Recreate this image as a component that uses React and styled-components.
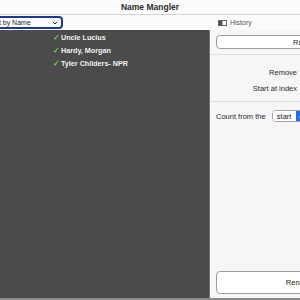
import React from 'react';
import styled, { createGlobalStyle } from 'styled-components';

const GlobalStyle = createGlobalStyle`
    html, body {
        margin: 0;
        padding: 0;
        width: 300px;
        height: 300px;
        overflow: hidden;
        background: #f6f6f6;
        font-family: "Liberation Sans", Arial, sans-serif;
    }
`;

const Window = styled.div`
    width: 300px;
    height: 300px;
    display: flex;
    flex-direction: column;
    overflow: hidden;
`;

const TitleBar = styled.div`
    height: 14px;
    flex: none;
    display: flex;
    align-items: center;
    justify-content: center;
    background: #fbfbfb;
    border-bottom: 1px solid #d4d4d4;
    font-size: 8.5px;
    font-weight: bold;
    color: #2b2b2b;
`;

const Toolbar = styled.div`
    height: 15px;
    flex: none;
    display: grid;
    grid-template-columns: 210px 1fr;
    background: #fbfbfb;
`;

const ToolLeft = styled.div`
    display: flex;
    align-items: center;
    overflow: hidden;
`;

const SortSelect = styled.div`
    margin-left: -18px;
    width: 70px;
    height: 9px;
    display: flex;
    align-items: center;
    justify-content: space-between;
    padding: 0 3px 0 4px;
    background: #fff;
    border: 2px solid #1c3a94;
    border-radius: 4px;
    font-size: 7px;
    color: #222;
`;

const ToolRight = styled.div`
    display: flex;
    align-items: center;
    gap: 3px;
    padding-left: 8px;
    font-size: 7px;
    color: #555;
`;

const Body = styled.div`
    flex: 1;
    display: grid;
    grid-template-columns: 210px 1fr;
    min-height: 0;
`;

const ListPane = styled.div`
    background: #4b4b4b;
    border-right: 1px solid #727272;
    padding-top: 1px;
`;

const Row = styled.div`
    height: 13px;
    display: flex;
    align-items: center;
    padding-left: 53px;
    gap: 2px;
    font-size: 7.2px;
    font-weight: bold;
    color: #f2f2f2;
`;

const Check = styled.span`
    width: 6px;
    color: #72d04a;
    font-size: 8px;
`;

const SidePane = styled.div`
    width: 180px;
    display: flex;
    flex-direction: column;
    background: #f6f6f6;
`;

const Section = styled.div`
    padding: ${p => p.pad || '0 0 0 6px'};
    border-bottom: ${p => (p.last ? 'none' : '1px solid #dedede')};
    display: flex;
    flex-direction: column;
    flex: ${p => (p.grow ? 1 : 'none')};
`;

const PaneButton = styled.button`
    width: 168px;
    height: ${p => p.h}px;
    background: #fff;
    border: 1px solid #9d9d9d;
    border-radius: 4px;
    font-family: inherit;
    font-size: 7.5px;
    color: #222;
    padding: 0;
`;

const FieldRow = styled.div`
    display: grid;
    grid-template-columns: 81px 1fr;
    align-items: center;
    height: 16px;
`;

const Label = styled.span`
    font-size: 7.5px;
    color: #2a2a2a;
    text-align: ${p => (p.right ? 'right' : 'left')};
    white-space: nowrap;
`;

const InlineRow = styled.div`
    display: flex;
    align-items: center;
    gap: 6px;
    height: 12px;
`;

const Segmented = styled.div`
    display: flex;
    height: 10px;
    border: 1px solid #a6a6a6;
    border-radius: 4px;
    overflow: hidden;
    background: #fff;
`;

const Segment = styled.span`
    display: flex;
    align-items: center;
    justify-content: center;
    width: ${p => p.w}px;
    font-size: 7.5px;
    color: ${p => (p.active ? '#fff' : '#222')};
    background: ${p => (p.active ? '#2869e8' : '#fff')};
`;

const Spacer = styled.div`
    flex: 1;
`;

const BottomStrip = styled.div`
    height: 2px;
    flex: none;
    background: #8a8a8a;
`;

const SidebarIcon = () => (
    <svg width="9" height="6" viewBox="0 0 9 6">
        <rect x="0.5" y="0.5" width="8" height="5" fill="#fff" stroke="#666" />
        <rect x="0.5" y="0.5" width="4" height="5" fill="#555" />
    </svg>
);

const ChevronDown = () => (
    <svg width="6" height="4" viewBox="0 0 6 4">
        <path d="M0.8 0.8 L3 3 L5.2 0.8" fill="none" stroke="#222" strokeWidth="1" />
    </svg>
);

const names = ['Uncle Lucius', 'Hardy, Morgan', 'Tyler Childers- NPR'];

export default function App() {
    return (
        <Window>
            <GlobalStyle />
            <TitleBar>Name Mangler</TitleBar>
            <Toolbar>
                <ToolLeft>
                    <SortSelect>
                        <span>Sort by Name</span>
                        <ChevronDown />
                    </SortSelect>
                </ToolLeft>
                <ToolRight>
                    <SidebarIcon />
                    History
                </ToolRight>
            </Toolbar>
            <Body>
                <ListPane>
                    {names.map(n => (
                        <Row key={n}>
                            <Check>✓</Check>
                            {n}
                        </Row>
                    ))}
                </ListPane>
                <SidePane>
                    <Section pad="5px 0 5px 6px">
                        <PaneButton h={14}>Run</PaneButton>
                    </Section>
                    <Section pad="9px 0 5px 6px">
                        <FieldRow>
                            <Label right>Remove</Label>
                        </FieldRow>
                        <FieldRow>
                            <Label right>Start at index</Label>
                        </FieldRow>
                    </Section>
                    <Section pad="8px 0 4px 6px" grow last>
                        <InlineRow>
                            <Label>Count from the</Label>
                            <Segmented>
                                <Segment w={23}>start</Segment>
                                <Segment w={20} active>end</Segment>
                            </Segmented>
                        </InlineRow>
                        <Spacer />
                        <PaneButton h={23}>Rename</PaneButton>
                    </Section>
                </SidePane>
            </Body>
            <BottomStrip />
        </Window>
    );
}
